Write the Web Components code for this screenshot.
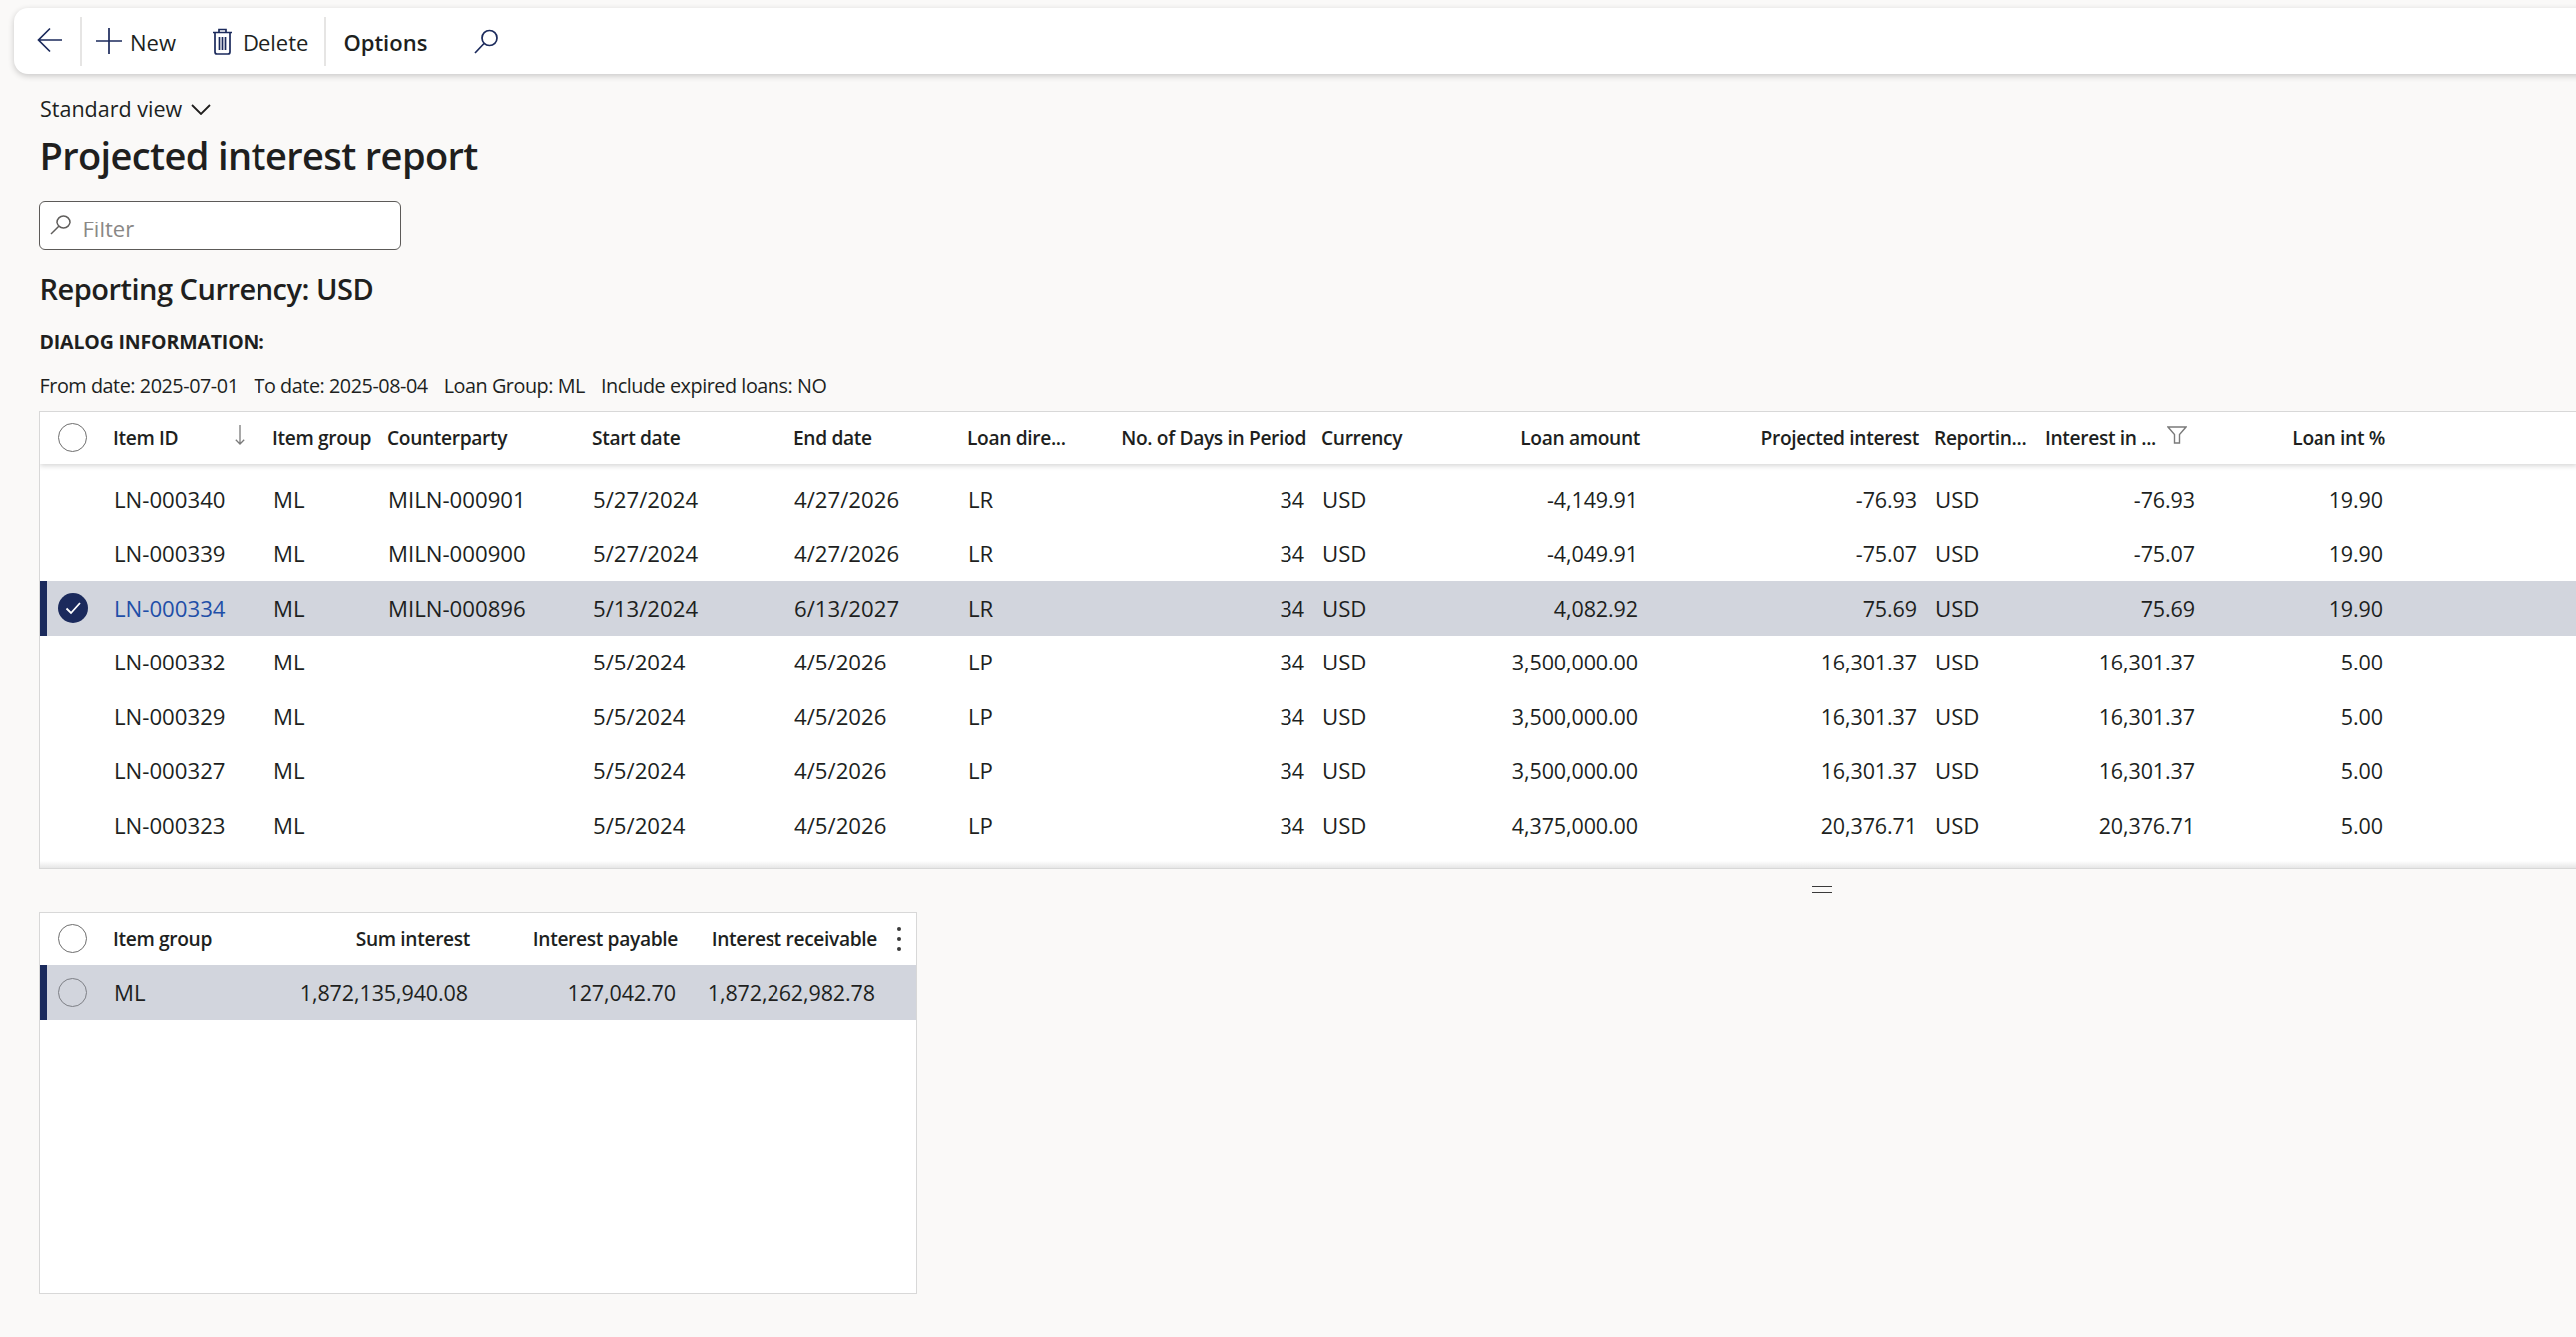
<!DOCTYPE html>
<html lang="en">
<head>
<meta charset="utf-8">
<title>Projected interest report</title>
<style>
  html, body { margin: 0; padding: 0; overflow: hidden; }
  body {
    width: 2581px; height: 1340px;
    background: #faf9f8; color: #201f1e;
    font-family: "Open Sans", "Noto Sans", "Liberation Sans", sans-serif;
    display: flex; flex-direction: column;
  }
</style>
</head>
<body>
<action-bar></action-bar>
<page-head></page-head>
<data-grid id="lines"></data-grid>
<grid-splitter></grid-splitter>
<data-grid id="totals"></data-grid>

<script>
const NAVY = '#1b2a5c';

class ActionBar extends HTMLElement {
  constructor() {
    super();
    this.attachShadow({ mode: 'open' });
    this.shadowRoot.innerHTML = `
      <style>
        :host {
          display: flex; align-items: center; flex: none;
          height: 66px; margin: 8px -40px 0 14px; padding-left: 23px;
          background: #fff; border-radius: 14px;
          box-shadow: 0 2px 6px rgba(0,0,0,.2);
          font-size: 22px; color: #201f1e;
        }
        svg { display: block; flex: none; fill: none; stroke: ${NAVY}; stroke-width: 1.7; }
        .sep { width: 2px; height: 49px; background: #e6e5e4; flex: none; }
        .item { display: flex; align-items: center; }
        .item span { position: relative; top: 1px; line-height: 30px; }
        b { font-weight: 600; position: relative; top: 1px; line-height: 30px; }
      </style>
      <svg width="26" height="26" viewBox="0 0 26 26" style="margin-top:-2px"><path d="M25 13H1.500M13 1.500 1.500 13 13 24.500"/></svg>
      <div class="sep" style="margin-left:17px"></div>
      <div class="item" style="margin-left:14px">
        <svg width="26" height="26" viewBox="0 0 26 26"><path d="M13 0v26M0 13h26"/></svg>
        <span style="margin-left:8px">New</span>
      </div>
      <div class="item" style="margin-left:36px">
        <svg width="21" height="27" viewBox="0 0 21 27"><path d="M1 4.500h19M7 4.500V1.500h7v3M3 4.500v19.500a2 2 0 0 0 2 2h11a2 2 0 0 0 2-2V4.500M7.500 9v13M10.500 9v13M13.500 9v13"/></svg>
        <span style="margin-left:10px">Delete</span>
      </div>
      <div class="sep" style="margin-left:16px"></div>
      <b style="margin-left:17px">Options</b>
      <svg style="margin-left:47px" width="25" height="25" viewBox="0 0 25 25"><circle cx="15.500" cy="9" r="7.500"/><path d="M10 14.500 1 24"/></svg>
    `;
  }
}

class PageHead extends HTMLElement {
  constructor() {
    super();
    this.attachShadow({ mode: 'open' });
    this.shadowRoot.innerHTML = `
      <style>
        :host { display: flex; flex-direction: column; flex: none; padding: 0 0 0 39px; color: #201f1e; }
        .view { display: flex; align-items: center; margin: 20px 0 0 1px; font-size: 21.500px; line-height: 30px; height: 30px; }
        .view svg { margin-left: 9px; }
        h1 { margin: 5px 0 0 .5px; font-size: 38px; font-weight: 600; line-height: 52px; letter-spacing: -.62px; }
        .filter {
          display: flex; align-items: center; box-sizing: border-box;
          width: 363px; height: 50px; margin-top: 19.500px; padding-left: 10px;
          background: #fff; border: 1.500px solid #5c5a58; border-radius: 6px;
          color: #8a8886; font-size: 22px;
        }
        .filter svg { margin-right: 11.500px; }
        .filter span { position: relative; top: 3px; }
        h2 { margin: 19px 0 0 .5px; font-size: 29px; font-weight: 600; line-height: 40px; letter-spacing: -.5px; }
        h3 { margin: 19px 0 0 .5px; font-size: 19.500px; font-weight: 700; line-height: 28px; letter-spacing: -.15px; }
        .info { display: flex; margin: 16.500px 0 0 .5px; font-size: 19.800px; line-height: 28px; letter-spacing: -.45px; }
        .info span { margin-right: 16px; }
      </style>
      <div class="view">Standard view
        <svg width="20" height="11" viewBox="0 0 20 11" fill="none" stroke="#201f1e" stroke-width="1.800"><path d="M1 1l9 9 9-9"/></svg>
      </div>
      <h1>Projected interest report</h1>
      <div class="filter">
        <svg width="21" height="21" viewBox="0 0 21 21" fill="none" stroke="#605e5c" stroke-width="1.500"><circle cx="13.500" cy="7.500" r="6.500"/><path d="M8.800 12.200 1 20"/></svg>
        <span>Filter</span>
      </div>
      <h2>Reporting Currency: USD</h2>
      <h3>DIALOG INFORMATION:</h3>
      <div class="info">
        <span>From date: 2025-07-01</span><span>To date: 2025-08-04</span><span>Loan Group: ML</span><span>Include expired loans: NO</span>
      </div>
    `;
  }
}

// column: [title, width, align]
const GRIDS = {
  lines: {
    css: 'margin: 11px -2px 0 39px; height: 459px;',
    head: 51.5, row: 54.5, bodyTop: 8.5, shadow: true,
    cols: [
      ['Item ID', 160], ['Item group', 115], ['Counterparty', 205], ['Start date', 202], ['End date', 174],
      ['Loan dire...', 141], ['No. of Days in Period', 214, 'r'], ['Currency', 176], ['Loan amount', 158, 'r'],
      ['Projected interest', 280, 'r'], ['Reportin...', 111], ['Interest in ...', 164, 'rl'], ['Loan int %', 192, 'r']
    ],
    rows: [
      ['LN-000340', 'ML', 'MILN-000901', '5/27/2024', '4/27/2026', 'LR', '34', 'USD', '-4,149.91', '-76.93', 'USD', '-76.93', '19.90'],
      ['LN-000339', 'ML', 'MILN-000900', '5/27/2024', '4/27/2026', 'LR', '34', 'USD', '-4,049.91', '-75.07', 'USD', '-75.07', '19.90'],
      ['LN-000334', 'ML', 'MILN-000896', '5/13/2024', '6/13/2027', 'LR', '34', 'USD', '4,082.92', '75.69', 'USD', '75.69', '19.90'],
      ['LN-000332', 'ML', '', '5/5/2024', '4/5/2026', 'LP', '34', 'USD', '3,500,000.00', '16,301.37', 'USD', '16,301.37', '5.00'],
      ['LN-000329', 'ML', '', '5/5/2024', '4/5/2026', 'LP', '34', 'USD', '3,500,000.00', '16,301.37', 'USD', '16,301.37', '5.00'],
      ['LN-000327', 'ML', '', '5/5/2024', '4/5/2026', 'LP', '34', 'USD', '3,500,000.00', '16,301.37', 'USD', '16,301.37', '5.00'],
      ['LN-000323', 'ML', '', '5/5/2024', '4/5/2026', 'LP', '34', 'USD', '4,375,000.00', '20,376.71', 'USD', '20,376.71', '5.00']
    ],
    selected: 2, checked: true, link: true
  },
  totals: {
    css: 'margin: 0 0 0 39px; width: 880px; height: 383px; border-right: 1.500px solid #d8d8d8;',
    head: 52.5, row: 54.5, bodyTop: 0,
    cols: [
      ['Item group', 130], ['Sum interest', 243, 'r'], ['Interest payable', 208, 'r'], ['Interest receivable', 200, 'r']
    ],
    rows: [['ML', '1,872,135,940.08', '127,042.70', '1,872,262,982.78']],
    selected: 0, kebab: true
  }
};

class DataGrid extends HTMLElement {
  connectedCallback() {
    const g = GRIDS[this.id];
    const tpl = '73px ' + g.cols.map(c => c[1] + 'px').join(' ');
    const radio = '<i class="radio"></i>';
    const check = `<svg class="check" width="30" height="30" viewBox="0 0 30 30"><circle cx="15" cy="15" r="15" fill="${NAVY}"/><path d="M8.500 15.500l4.500 4.500 9-10" fill="none" stroke="#fff" stroke-width="1.800"/></svg>`;
    const head = g.cols.map((c, i) => {
      const right = c[2] === 'r';
      let extra = '';
      if (i === 0 && this.id === 'lines') extra = '<svg class="abs" style="left:122px;top:1px" width="10" height="20" viewBox="0 0 10 20" fill="none" stroke="#7a7a7a" stroke-width="1.300"><path d="M5 0v19M.8 14.800 5 19l4.200-4.200"/></svg>';
      if (c[2] === 'rl') extra = '<svg class="abs" style="left:121.500px;top:2px" width="20" height="18" viewBox="0 0 20 18" fill="none" stroke="#7a7a7a" stroke-width="1.400"><path d="M1 1h18l-6.500 7.500V17h-5V8.500z"/></svg>';
      return `<div class="h ${right ? 'r' : ''}">${c[0]}${extra}</div>`;
    }).join('');
    const rows = g.rows.map((r, n) => {
      const sel = n === g.selected;
      const first = sel && g.checked ? check : (sel ? radio : (g.checked ? '' : radio));
      const cells = r.map((v, i) => {
        const a = g.cols[i][2];
        const isLink = g.link && sel && i === 0;
        const cls = a === 'rl' ? 'r wide' : (a === 'r' ? 'r' : '');
        return `<div class="c ${cls} ${isLink ? 'link' : ''}">${v}</div>`;
      }).join('');
      return `<div class="row ${sel ? 'sel' : ''}"><div class="sel-cell">${first}</div>${cells}</div>`;
    }).join('');
    this.attachShadow({ mode: 'open' });
    this.shadowRoot.innerHTML = `
      <style>
        :host {
          display: block; flex: none; box-sizing: border-box; position: relative; overflow: hidden;
          background: #fff; border: 1.500px solid #d8d8d8; ${g.css}
          color: #201f1e;
        }
        .row, .head { display: grid; grid-template-columns: ${tpl}; align-items: center; }
        .head { height: ${g.head}px; position: relative; background: #fff; ${g.shadow ? 'box-shadow: 0 2px 5px rgba(0,0,0,.16);' : ''} }
        .body { padding-top: ${g.bodyTop}px; }
        .row { height: ${g.row}px; }
        .h { position: relative; font-size: 19.200px; font-weight: 600; white-space: nowrap; line-height: 26px; padding-top: 1px; letter-spacing: -.35px; }
        .c { font-size: 22.200px; white-space: nowrap; line-height: 28px; padding-left: 1px; padding-top: 1px; }
        .r { text-align: right; padding-right: 15px; padding-left: 0; }
        .c.r { padding-right: 17px; font-size: 21.500px; letter-spacing: -.1px; }
        .c.wide { padding-right: 14px; }
        .link { color: #1f4fa8; }
        .sel { background: #d2d5dd; box-shadow: inset 7px 0 0 ${NAVY}; }
        .sel-cell { display: flex; justify-content: center; align-items: center; height: 100%; padding-right: 8px; box-sizing: border-box; }
        .radio { display: block; width: 29px; height: 29px; border-radius: 50%; border: 1.500px solid #6e6e6e; box-sizing: border-box; }
        .head .radio { background: #fff; }
        .sel .radio { border-color: #7d7f85; }
        .abs { position: absolute; display: block; }
        .fade { position: absolute; left: 0; right: 0; bottom: 0; height: 7px; background: linear-gradient(#fff, #e6e6e6); }
        .kebab { position: absolute; right: 15px; top: 14px; width: 5px; height: 24px; display: flex; flex-direction: column; justify-content: space-between; align-items: center; }
        .kebab i { display: block; width: 4px; height: 4px; border-radius: 50%; background: #3a3a3a; }
      </style>
      <div class="head"><div class="sel-cell">${radio}</div>${head}</div>
      <div class="body">${rows}</div>
      ${g.shadow ? '<div class="fade"></div>' : ''}
      ${g.kebab ? '<div class="kebab"><i></i><i></i><i></i></div>' : ''}
    `;
  }
}

class GridSplitter extends HTMLElement {
  constructor() {
    super();
    this.attachShadow({ mode: 'open' });
    this.shadowRoot.innerHTML = `
      <style>
        :host { display: block; flex: none; height: 42.500px; position: relative; }
        div { position: absolute; left: 1816px; top: 17px; width: 20px; height: 5px; border-top: 1.500px solid #3a3a3a; border-bottom: 1.500px solid #3a3a3a; }
      </style>
      <div></div>
    `;
  }
}

customElements.define('action-bar', ActionBar);
customElements.define('page-head', PageHead);
customElements.define('data-grid', DataGrid);
customElements.define('grid-splitter', GridSplitter);
</script>
</body>
</html>
